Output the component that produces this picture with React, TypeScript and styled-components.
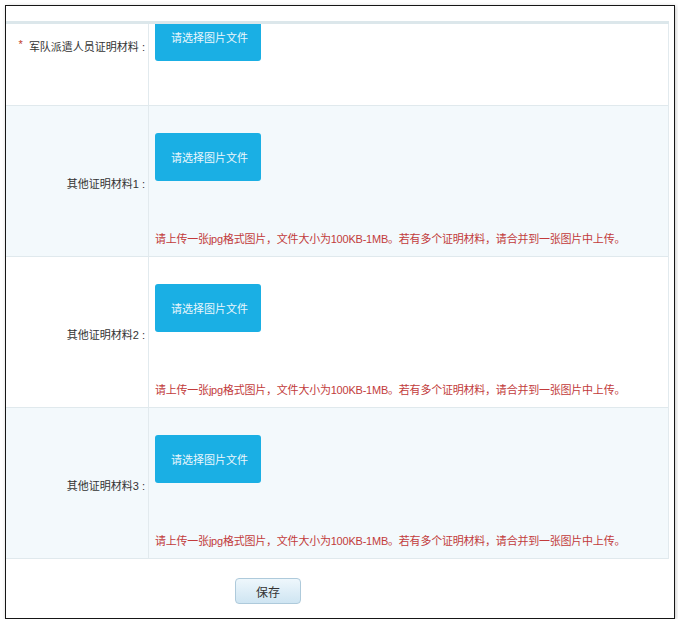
import React from 'react';
import styled, { createGlobalStyle } from 'styled-components';

const GlobalStyle = createGlobalStyle`
  html, body {
    margin: 0;
    padding: 0;
    background: #ffffff;
  }
  body {
    font-family: "Liberation Sans", "Noto Sans CJK SC", sans-serif;
    font-size: 11px;
    color: #333;
  }
`;

const Frame = styled.div`
  box-sizing: border-box;
  margin: 5px 0 0 5px;
  width: 670px;
  height: 614px;
  border: 1.5px solid #161616;
  box-shadow: 1px 1px 4px rgba(0, 0, 0, 0.22);
  background: #fff;
  padding: 15px 5px 0 0;
`;

const TopBar = styled.div`
  height: 3px;
  background: #dce7eb;
`;

const Table = styled.div`
  display: flex;
  flex-direction: column;
  border-right: 1px solid #e2eaee;
`;

const Row = styled.div<{ $alt?: boolean; $h: number }>`
  display: grid;
  grid-template-columns: 143px 1fr;
  height: ${(p) => p.$h}px;
  background: ${(p) => (p.$alt ? '#f3f9fc' : '#ffffff')};
  border-bottom: 1px solid #e0e9ed;
  overflow: hidden;
`;

const Label = styled.div<{ $top?: boolean }>`
  display: flex;
  justify-content: flex-end;
  align-items: ${(p) => (p.$top ? 'flex-start' : 'center')};
  padding: ${(p) => (p.$top ? '14px 3px 0 0' : '4px 3px 0 0')};
  border-right: 1px solid #e2eaee;
  font-size: 11px;
  color: #333;
  white-space: pre;
`;

const Star = styled.span`
  color: #c0392b;
  margin-right: 6px;
`;

const Content = styled.div<{ $cut?: boolean }>`
  display: flex;
  flex-direction: column;
  justify-content: space-between;
  align-items: flex-start;
  padding: ${(p) => (p.$cut ? '0 0 0 6px' : '27px 0 10px 6px')};
`;

const PickButton = styled.button<{ $cut?: boolean }>`
  width: 106px;
  height: ${(p) => (p.$cut ? 37 : 48)}px;
  padding: ${(p) => (p.$cut ? '0 0 11px 3px' : '0 0 0 3px')};
  border: none;
  border-radius: ${(p) => (p.$cut ? '0 0 3px 3px' : '3px')};
  background: #1aafe4;
  color: #eaf7fd;
  font-family: "Liberation Sans", "Noto Sans CJK SC", sans-serif;
  font-size: 11px;
  cursor: pointer;
`;

const Hint = styled.div`
  color: #c23b3b;
  font-size: 11px;
  letter-spacing: -0.22px;
  white-space: nowrap;
`;

const Footer = styled.div`
  padding: 19px 0 0 229px;
`;

const SaveButton = styled.button`
  width: 66px;
  height: 26px;
  border: 1px solid #aecadb;
  border-radius: 4px;
  background: linear-gradient(#eef7fc, #cfe5f2);
  color: #333;
  font-family: "Liberation Sans", "Noto Sans CJK SC", sans-serif;
  font-size: 12px;
  cursor: pointer;
`;

const hint = '请上传一张jpg格式图片，文件大小为100KB-1MB。若有多个证明材料，请合并到一张图片中上传。';

const extras = ['其他证明材料1 :', '其他证明材料2 :', '其他证明材料3 :'];

export default function App() {
  return (
    <>
      <GlobalStyle />
      <Frame>
        <TopBar />
        <Table>
          <Row $h={81}>
            <Label $top>
              <Star>*</Star>军队派遣人员证明材料 :
            </Label>
            <Content $cut>
              <PickButton $cut>请选择图片文件</PickButton>
            </Content>
          </Row>
          {extras.map((name, i) => (
            <Row key={name} $h={150} $alt={i % 2 === 0}>
              <Label>{name}</Label>
              <Content>
                <PickButton>请选择图片文件</PickButton>
                <Hint>{hint}</Hint>
              </Content>
            </Row>
          ))}
        </Table>
        <Footer>
          <SaveButton>保存</SaveButton>
        </Footer>
      </Frame>
    </>
  );
}
